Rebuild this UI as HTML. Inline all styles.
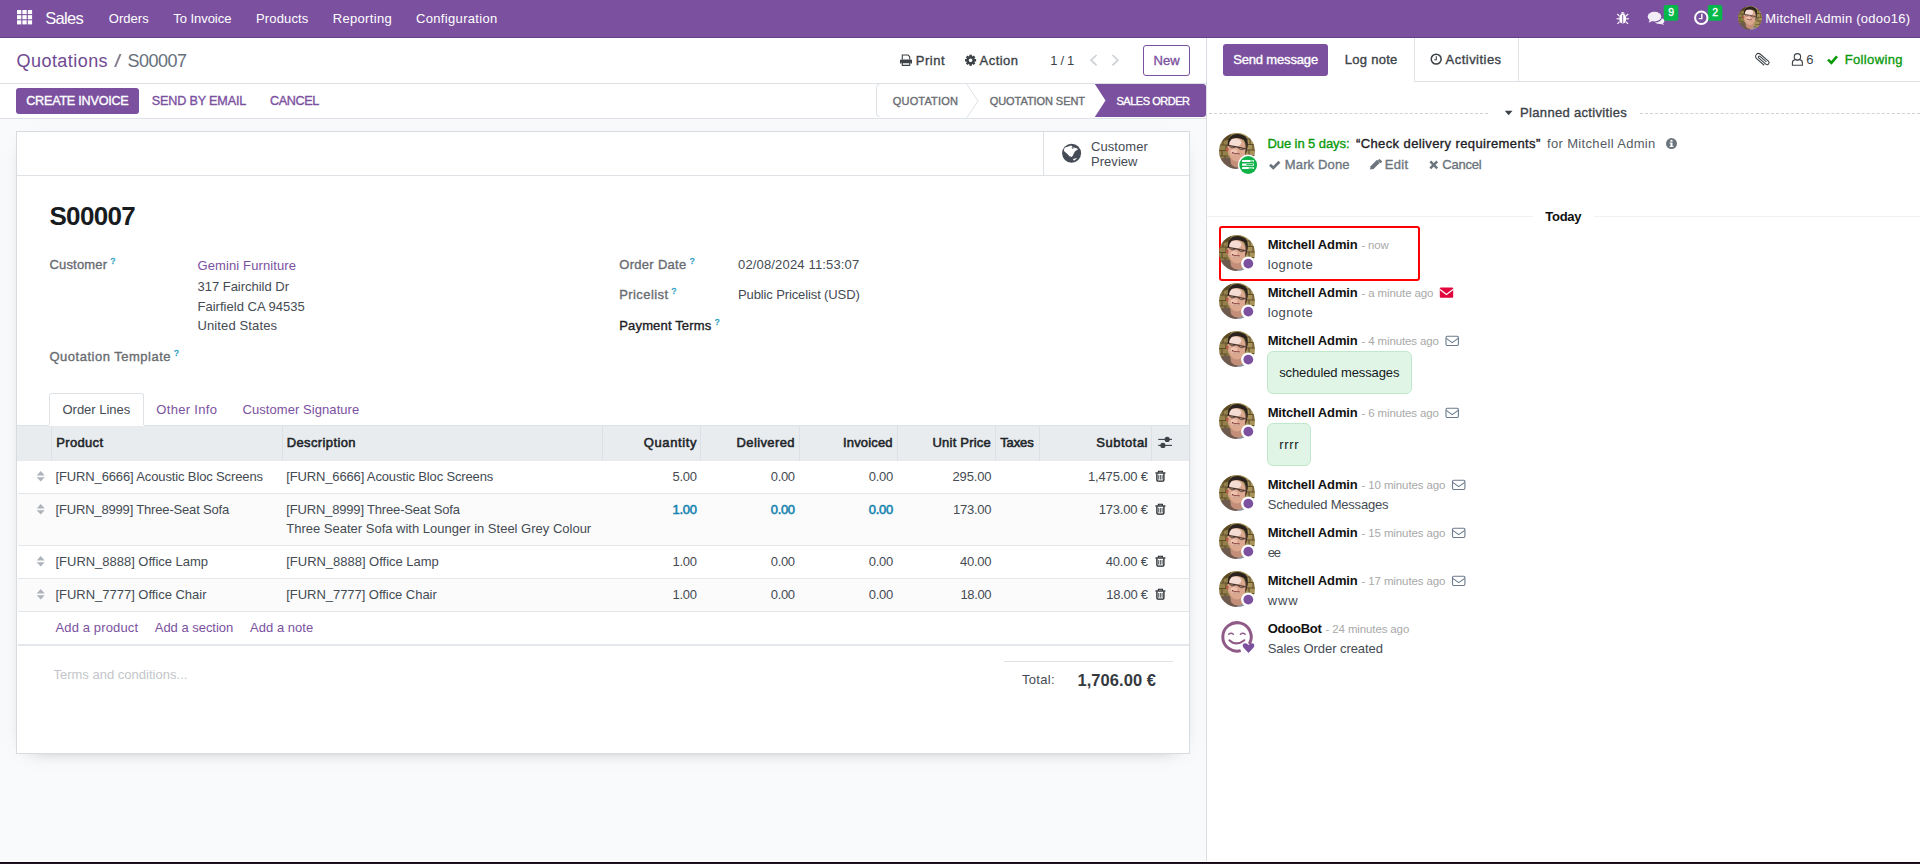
<!DOCTYPE html>
<html lang="en"><head><meta charset="utf-8"><title>Odoo - S00007</title>
<style>
html,body{margin:0;padding:0}
body{width:1920px;height:864px;overflow:hidden;position:relative;background:#f9fafb;font-family:'Liberation Sans',sans-serif;font-size:13px;color:#444b53}
.a{position:absolute;box-sizing:border-box}
.t{position:absolute;white-space:pre;font-family:'Liberation Sans',sans-serif}
svg{position:absolute;overflow:visible}
.hl{position:absolute;height:1px;background:#dee2e6}
.vl{position:absolute;width:1px;background:#dee2e6}

</style></head>
<body>
<!-- ===== navbar ===== -->
<div class="a" id="navbar" style="left:0;top:0;width:1920px;height:38px;background:#7b519f;border-bottom:1px solid #64408a"></div>
<!-- ===== control panel / status bar ===== -->
<div class="a" id="cp" style="left:0;top:38px;width:1206px;height:46px;background:#fff;border-bottom:1px solid #dee2e6"></div>
<div class="a" id="statusbar" style="left:0;top:84px;width:1206px;height:35px;background:#fff;border-bottom:1px solid #dee2e6"></div>
<!-- ===== chatter panel ===== -->
<div class="a" id="chatter" style="left:1206px;top:38px;width:714px;height:826px;background:#fff;border-left:1px solid #dadde3"></div>
<!-- bottom dark strip -->
<div class="a" style="left:0;top:861px;width:1920px;height:1px;background:#fff"></div>
<div class="a" style="left:0;top:862px;width:1920px;height:1px;background:#140312"></div>
<div class="a" style="left:0;top:863px;width:1920px;height:1px;background:#21131f"></div>

<!-- buttons in control panel -->
<div class="a" style="left:1143px;top:45px;width:47px;height:31px;border:1px solid #7b519f;border-radius:3px;background:#fff"></div>
<div class="a" style="left:16px;top:88px;width:123px;height:26px;background:#7b519f;border-radius:3px"></div>

<!-- status arrows -->
<svg style="left:876px;top:84px" width="331" height="34" viewBox="0 0 331 34">
  <path d="M3.5 0.5 Q0.5 0.5 0.5 3.5 V29.5 Q0.5 32.5 3.5 32.5" fill="none" stroke="#dee2e6"/>
  <path d="M91 0.5 L102 17 L91 33.5" fill="none" stroke="#dee2e6"/>
  <path d="M218.8 0 H327 Q330 0 330 3 V30 Q330 33 327 33 H218.8 L229.5 16.5 Z" fill="#7b519f"/>
</svg>

<!-- ===== form sheet ===== -->
<div class="a" id="sheet" style="left:16px;top:131px;width:1174px;height:623px;background:#fff;border:1px solid #d8dce1;box-shadow:0 5px 20px -15px rgba(0,0,0,.6)"></div>
<div class="hl" style="left:17px;top:175px;width:1172px"></div>
<div class="vl" style="left:1043px;top:132px;height:43px"></div>

<!-- notebook tab -->
<div class="a" style="left:49px;top:393px;width:95px;height:33px;border:1px solid #dee2e6;border-bottom:none;border-radius:3px 3px 0 0;background:#fff"></div>
<!-- table header -->
<div class="a" style="left:17px;top:425px;width:1172px;height:36px;background:#e9ecef;border-top:1px solid #dee2e6"></div>
<div class="a" style="left:49px;top:425px;width:95px;height:1px;background:#fff"></div>
<div class="vl" style="left:51px;top:426px;height:35px;background:#dde1e5"></div>
<div class="vl" style="left:282px;top:426px;height:35px;background:#dde1e5"></div>
<div class="vl" style="left:602px;top:426px;height:35px;background:#dde1e5"></div>
<div class="vl" style="left:700px;top:426px;height:35px;background:#dde1e5"></div>
<div class="vl" style="left:799px;top:426px;height:35px;background:#dde1e5"></div>
<div class="vl" style="left:897px;top:426px;height:35px;background:#dde1e5"></div>
<div class="vl" style="left:995px;top:426px;height:35px;background:#dde1e5"></div>
<div class="vl" style="left:1039px;top:426px;height:35px;background:#dde1e5"></div>
<div class="vl" style="left:1151px;top:426px;height:35px;background:#dde1e5"></div>
<!-- rows -->
<div class="a" style="left:17px;top:494px;width:1172px;height:51px;background:#fbfbfc"></div>
<div class="a" style="left:17px;top:579px;width:1172px;height:32px;background:#fbfbfc"></div>
<div class="hl" style="left:18px;top:493px;width:1171px;background:#e4e7ea"></div>
<div class="hl" style="left:18px;top:545px;width:1171px;background:#e4e7ea"></div>
<div class="hl" style="left:18px;top:578px;width:1171px;background:#e4e7ea"></div>
<div class="hl" style="left:18px;top:611px;width:1171px;background:#e4e7ea"></div>
<div class="hl" style="left:18px;top:644px;width:1171px;height:2px;background:#e4e8ec"></div>
<div class="hl" style="left:1004px;top:661px;width:169px;background:#dee2e6"></div>

<!-- ===== chatter topbar ===== -->
<div class="a" style="left:1223px;top:44px;width:105px;height:32px;background:#7b519f;border-radius:3px"></div>
<div class="vl" style="left:1414px;top:38px;height:44px"></div>
<div class="hl" style="left:1414px;top:81px;width:506px"></div>
<div class="vl" style="left:1518px;top:38px;height:43px"></div>
<!-- planned activities dashed -->
<div class="a" style="left:1209px;top:113px;width:279px;height:0;border-top:1px dashed #cfd3d8"></div>
<div class="a" style="left:1640px;top:113px;width:280px;height:0;border-top:1px dashed #cfd3d8"></div>
<!-- today separator -->
<div class="hl" style="left:1207px;top:216px;width:326px;background:#f1f2f4"></div>
<div class="hl" style="left:1594px;top:216px;width:326px;background:#f1f2f4"></div>
<!-- red highlight -->
<div class="a" style="left:1219px;top:226px;width:201px;height:55px;border:2px solid #ff0000;border-radius:3px"></div>
<!-- bubbles -->
<div class="a" style="left:1267px;top:351px;width:145px;height:43px;background:#e0f5e6;border:1px solid #bfe9cc;border-radius:6px"></div>
<div class="a" style="left:1267px;top:423px;width:44px;height:43px;background:#e0f5e6;border:1px solid #bfe9cc;border-radius:6px"></div>
<svg id="icons" style="left:0;top:0" width="1920" height="864" viewBox="0 0 1920 864">
<rect x="17.00" y="10.00" width="4.3" height="4.1" fill="#fff"/>
<rect x="17.00" y="15.15" width="4.3" height="4.1" fill="#fff"/>
<rect x="17.00" y="20.30" width="4.3" height="4.1" fill="#fff"/>
<rect x="22.40" y="10.00" width="4.3" height="4.1" fill="#fff"/>
<rect x="22.40" y="15.15" width="4.3" height="4.1" fill="#fff"/>
<rect x="22.40" y="20.30" width="4.3" height="4.1" fill="#fff"/>
<rect x="27.80" y="10.00" width="4.3" height="4.1" fill="#fff"/>
<rect x="27.80" y="15.15" width="4.3" height="4.1" fill="#fff"/>
<rect x="27.80" y="20.30" width="4.3" height="4.1" fill="#fff"/>
<g fill="none" stroke="#3c4248" stroke-width="1.1"><path d="M902.3 59.6 V55 H908 L909.7 56.7 V59.6"/><path d="M902.3 62.6 H909.7 V65.4 H902.3 Z" fill="#fff"/></g>
<path d="M901 59.4 H911 Q912 59.4 912 60.6 V63.6 H910.3 V62 H901.7 V63.6 H900 V60.6 Q900 59.4 901 59.4 Z" fill="#3c4248"/>
<g transform="translate(970.6 60.25)" fill="#3c4248"><circle r="3.05" fill="none" stroke="#3c4248" stroke-width="2.5"/><rect x="-1.25" y="-5.55" width="2.5" height="2.2" transform="rotate(0)"/><rect x="-1.25" y="-5.55" width="2.5" height="2.2" transform="rotate(45)"/><rect x="-1.25" y="-5.55" width="2.5" height="2.2" transform="rotate(90)"/><rect x="-1.25" y="-5.55" width="2.5" height="2.2" transform="rotate(135)"/><rect x="-1.25" y="-5.55" width="2.5" height="2.2" transform="rotate(180)"/><rect x="-1.25" y="-5.55" width="2.5" height="2.2" transform="rotate(225)"/><rect x="-1.25" y="-5.55" width="2.5" height="2.2" transform="rotate(270)"/><rect x="-1.25" y="-5.55" width="2.5" height="2.2" transform="rotate(315)"/></g>
<path d="M1096.6 55 L1091 60.2 L1096.6 65.4" fill="none" stroke="#cdd1d5" stroke-width="1.7"/>
<path d="M1112.4 55 L1118 60.2 L1112.4 65.4" fill="none" stroke="#cdd1d5" stroke-width="1.7"/>
<circle cx="1071.6" cy="153.2" r="9.5" fill="#454c55"/>
<path d="M1063.75 149.75 L1065.01 147.46 L1068.91 146.32 L1071.32 145.51 L1072.92 147.35 L1076.93 148.15 L1077.97 149.52 L1075.33 151.01 L1073.95 153.19 L1073.15 155.03 L1071.89 156.97 L1069.48 156.17 L1067.65 154.22 L1065.59 152.62 L1064.21 151.13 Z" fill="#fff"/>
<path d="M1072.92 159.04 L1077.28 158.01 L1074.07 160.76 Z" fill="#fff"/>
<path d="M1071.32 146.89 L1074.07 147.75 L1072.64 149.07 Z" fill="#454c55"/>
<ellipse cx="1622.7" cy="18.6" rx="3.5" ry="5" fill="#fff"/>
<path d="M1620.6 13.6 A2.2 2.2 0 0 1 1624.8 13.6 Z" fill="#fff"/>
<path d="M1622.7 15 V23.5" stroke="#7b519f" stroke-width="0.9"/>
<g stroke="#fff" stroke-width="1.15" fill="none"><path d="M1619.4 16.2 L1617.2 13.9"/><path d="M1626 16.2 L1628.2 13.9"/><path d="M1619.2 18.8 H1616.6"/><path d="M1626.2 18.8 H1628.8"/><path d="M1619.6 21.6 L1617.4 23.8"/><path d="M1625.8 21.6 L1628 23.8"/></g>
<g fill="#f1ecf6"><ellipse cx="1659.6" cy="21" rx="4.8" ry="3" /><path d="M1662 22.5 L1664.2 25 L1659 23.6 Z"/></g>
<ellipse cx="1654.6" cy="17" rx="7.6" ry="5.6" fill="#7b519f"/>
<g fill="#f1ecf6"><ellipse cx="1654.5" cy="16.6" rx="6.8" ry="4.9"/><path d="M1650 19 L1648.6 22.8 L1653.5 20.6 Z"/></g>
<rect x="1663.8" y="5.1" width="14.5" height="15.7" rx="2.2" fill="#06b84a"/>
<rect x="1707.8" y="5.1" width="14.5" height="15.7" rx="2.2" fill="#06b84a"/>
<circle cx="1701.3" cy="17.8" r="6.2" fill="none" stroke="#fff" stroke-width="2"/>
<path d="M1701.8 13.8 V18.6 H1698.8" fill="none" stroke="#fff" stroke-width="1.4"/>
<g transform="translate(1761.3 60.2) rotate(-49)" fill="none" stroke="#3c4248" stroke-width="1.05"><path d="M-1.9 5.5 V-4.6 A2.9 2.9 0 0 1 3.9 -4.6 V6 A1.95 1.95 0 0 1 0 6 V-3.5 A1 1 0 0 1 2 -3.5 V5"/></g>
<g fill="none" stroke="#3c4248" stroke-width="1.1"><circle cx="1797.4" cy="56.8" r="3.2"/><path d="M1792.4 65.3 V63 Q1792.4 59.9 1795.2 59.6 Q1797.4 61 1799.6 59.6 Q1802.4 59.9 1802.4 63 V65.3 Z"/></g>
<path d="M1828 59.6 L1831.4 62.8 L1837 56.4" fill="none" stroke="#0b9a0b" stroke-width="2.6"/>
<circle cx="1436.2" cy="59.15" r="4.95" fill="none" stroke="#3c4248" stroke-width="1.5"/>
<path d="M1436.3 56.2 V59.8 H1434.2" fill="none" stroke="#3c4248" stroke-width="1.1"/>
<path d="M1504.8 110.8 H1512.5 L1508.65 115.2 Z" fill="#3c4248"/>
<path d="M1270 164.8 L1273.3 167.9 L1279.4 161.7" fill="none" stroke="#6c757d" stroke-width="2.8"/>
<g fill="#6c757d"><path d="M1370 169.5 L1370.6 166.2 L1377 159.8 L1379.9 162.7 L1373.5 169.1 Z"/><path d="M1377.8 159 L1378.9 157.9 Q1379.5 157.4 1380.1 158 L1381.8 159.7 Q1382.3 160.3 1381.8 160.8 L1380.7 161.9 Z" transform="translate(0 1.4)"/></g>
<path d="M1430.3 161.4 L1437.2 168.3 M1437.2 161.4 L1430.3 168.3" fill="none" stroke="#6c757d" stroke-width="2.5"/>
<circle cx="1671.5" cy="143.6" r="5.5" fill="#6c757d"/><rect x="1670.5" y="142.6" width="2" height="4.2" fill="#fff"/><rect x="1670.5" y="139.9" width="2" height="1.8" fill="#fff"/><rect x="1669.6" y="142.6" width="1.5" height="1" fill="#fff"/><rect x="1669.6" y="145.9" width="3.8" height="1" fill="#fff"/>
<g stroke="#3c4248" stroke-width="1.1"><path d="M1158.2 439.4 H1172"/><path d="M1158.2 445.4 H1172"/></g><circle cx="1167.2" cy="439.4" r="2.6" fill="#3c4248"/><circle cx="1162.9" cy="445.4" r="2.6" fill="#3c4248"/>
<g fill="#adb3ba" transform="translate(0 0)"><path d="M36.7 475.5 H44.7 L40.7 470.9 Z"/><path d="M36.7 477.2 H44.7 L40.7 481.5 Z"/></g>
<g transform="translate(0 0)" fill="none" stroke="#1d2125"><path d="M1155.4 473 H1165.4" stroke-width="1.3"/><path d="M1158.4 472.6 V471.2 H1162.4 V472.6" stroke-width="1.1"/><path d="M1156.9 473.4 V480.1 Q1156.9 481.1 1157.9 481.1 H1162.9 Q1163.9 481.1 1163.9 480.1 V473.4" stroke-width="1.3"/><path d="M1158.7 475 V479.6 M1160.4 475 V479.6 M1162.1 475 V479.6" stroke-width="0.75"/></g>
<g fill="#adb3ba" transform="translate(0 33)"><path d="M36.7 475.5 H44.7 L40.7 470.9 Z"/><path d="M36.7 477.2 H44.7 L40.7 481.5 Z"/></g>
<g transform="translate(0 33)" fill="none" stroke="#1d2125"><path d="M1155.4 473 H1165.4" stroke-width="1.3"/><path d="M1158.4 472.6 V471.2 H1162.4 V472.6" stroke-width="1.1"/><path d="M1156.9 473.4 V480.1 Q1156.9 481.1 1157.9 481.1 H1162.9 Q1163.9 481.1 1163.9 480.1 V473.4" stroke-width="1.3"/><path d="M1158.7 475 V479.6 M1160.4 475 V479.6 M1162.1 475 V479.6" stroke-width="0.75"/></g>
<g fill="#adb3ba" transform="translate(0 85)"><path d="M36.7 475.5 H44.7 L40.7 470.9 Z"/><path d="M36.7 477.2 H44.7 L40.7 481.5 Z"/></g>
<g transform="translate(0 85)" fill="none" stroke="#1d2125"><path d="M1155.4 473 H1165.4" stroke-width="1.3"/><path d="M1158.4 472.6 V471.2 H1162.4 V472.6" stroke-width="1.1"/><path d="M1156.9 473.4 V480.1 Q1156.9 481.1 1157.9 481.1 H1162.9 Q1163.9 481.1 1163.9 480.1 V473.4" stroke-width="1.3"/><path d="M1158.7 475 V479.6 M1160.4 475 V479.6 M1162.1 475 V479.6" stroke-width="0.75"/></g>
<g fill="#adb3ba" transform="translate(0 118)"><path d="M36.7 475.5 H44.7 L40.7 470.9 Z"/><path d="M36.7 477.2 H44.7 L40.7 481.5 Z"/></g>
<g transform="translate(0 118)" fill="none" stroke="#1d2125"><path d="M1155.4 473 H1165.4" stroke-width="1.3"/><path d="M1158.4 472.6 V471.2 H1162.4 V472.6" stroke-width="1.1"/><path d="M1156.9 473.4 V480.1 Q1156.9 481.1 1157.9 481.1 H1162.9 Q1163.9 481.1 1163.9 480.1 V473.4" stroke-width="1.3"/><path d="M1158.7 475 V479.6 M1160.4 475 V479.6 M1162.1 475 V479.6" stroke-width="0.75"/></g>
<rect x="1439.8" y="287.5" width="13.4" height="10.3" rx="1.2" fill="#e1063c"/><path d="M1440 289.6 L1446.5 294.4 L1453 289.6" fill="none" stroke="#fff" stroke-width="1.3"/>
<g fill="none" stroke="#6b7a8c" stroke-width="1.1"><rect x="1446.0" y="336.3" width="12.4" height="9.2" rx="1.2"/><path d="M1446.2 338.4 L1452.2 342.6 L1458.2 338.4"/></g>
<g fill="none" stroke="#6b7a8c" stroke-width="1.1"><rect x="1446.0" y="408.3" width="12.4" height="9.2" rx="1.2"/><path d="M1446.2 410.4 L1452.2 414.6 L1458.2 410.4"/></g>
<g fill="none" stroke="#6b7a8c" stroke-width="1.1"><rect x="1452.5" y="480.3" width="12.4" height="9.2" rx="1.2"/><path d="M1452.7 482.4 L1458.7 486.6 L1464.7 482.4"/></g>
<g fill="none" stroke="#6b7a8c" stroke-width="1.1"><rect x="1452.5" y="528.3" width="12.4" height="9.2" rx="1.2"/><path d="M1452.7 530.4 L1458.7 534.6 L1464.7 530.4"/></g>
<g fill="none" stroke="#6b7a8c" stroke-width="1.1"><rect x="1452.5" y="576.3" width="12.4" height="9.2" rx="1.2"/><path d="M1452.7 578.4 L1458.7 582.6 L1464.7 578.4"/></g>
</svg>
<svg width="0" height="0" style="left:0;top:0"><defs>
<filter id="bl" x="-10%" y="-10%" width="120%" height="120%"><feGaussianBlur stdDeviation="0.7"/></filter>
<clipPath id="cc"><circle cx="18" cy="18" r="18"/></clipPath>
<symbol id="av" viewBox="0 0 36 36">
 <g clip-path="url(#cc)"><g filter="url(#bl)">
  <rect x="-2" y="-2" width="40" height="40" fill="#94804a"/>
  <path d="M-2 -2 H14 L9 7 L-2 9 Z" fill="#5a4724"/>
  <rect x="22" y="-2" width="16" height="40" fill="#a8935a"/>
  <g stroke="#5e4e2a" stroke-width="1.1" fill="none">
   <path d="M-1 6.5 H12 M-1 12 H10 M-1 17.5 H9 M-1 23 H9 M-1 28 H8"/>
   <path d="M26 6 H37 M27 11.5 H37 M27 17 H37 M27 22.5 H37 M26 28 H37"/>
   <path d="M4 6.5 V12 M7 12 V17.5 M3 17.5 V23 M6 23 V28 M31 6 V11.5 M34 11.5 V17 M30 17 V22.5 M33 22.5 V28"/>
  </g>
  <path d="M-2 38 V27 Q6 23.5 12 25 L24 30 Q30 32 31 38 Z" fill="#6d5a4e"/>
  <path d="M17 38 Q18 32 27 31.5 L31 38 Z" fill="#8b919c"/>
  <path d="M11 24 L23 24 L24 33 Q17 37 12 31 Z" fill="#c48f78"/>
  <ellipse cx="17.6" cy="16.2" rx="9.2" ry="12.2" transform="rotate(-6 17.6 16.2)" fill="#dba78f"/>
  <ellipse cx="16.2" cy="9.6" rx="6.2" ry="4.2" fill="#f6ddd3"/>
  <ellipse cx="15" cy="19" rx="3.4" ry="3" fill="#efc3b0"/>
  <ellipse cx="8.3" cy="16.6" rx="1.3" ry="2.4" fill="#b9604e"/>
  <path d="M8.8 12.5 Q8.2 4.5 14 1.8 Q21 -0.6 26.6 3.6 Q29.6 7.4 28.6 14.6 L27.4 15.6 Q27 9.6 24.8 7 Q19 3.8 12.6 6 Q10.4 8 9.8 12.6 Z" fill="#2b211e"/>
  <path d="M26.6 9 Q29 12 27.8 19 L26 22 Q27 15 26.6 9 Z" fill="#4a362e"/>
  <path d="M8.2 12.3 L16.4 13.6 L26.8 15.8" stroke="#43332f" stroke-width="1.1" fill="none"/>
  <path d="M10.4 13.2 Q12.6 16.2 16 14.2 M18.6 14.6 Q21.4 17.8 25.4 16" stroke="#4b3a35" stroke-width="0.9" fill="none"/>
  <path d="M13 19.6 Q16.4 21.8 20.4 20.6" stroke="#7c2f2c" stroke-width="1.5" fill="none"/>
  <path d="M13.6 20.6 Q16.6 22 19.6 21.2" stroke="#f2e2da" stroke-width="0.7" fill="none"/>
 </g></g>
</symbol></defs></svg>

<svg style="left:1738px;top:6px" width="24" height="24"><use href="#av"/></svg>
<svg style="left:1219px;top:133px" width="36" height="36"><use href="#av"/></svg>
<svg style="left:1219px;top:235px" width="36" height="36"><use href="#av"/></svg>
<svg style="left:1219px;top:283px" width="36" height="36"><use href="#av"/></svg>
<svg style="left:1219px;top:331px" width="36" height="36"><use href="#av"/></svg>
<svg style="left:1219px;top:403px" width="36" height="36"><use href="#av"/></svg>
<svg style="left:1219px;top:475px" width="36" height="36"><use href="#av"/></svg>
<svg style="left:1219px;top:523px" width="36" height="36"><use href="#av"/></svg>
<svg style="left:1219px;top:571px" width="36" height="36"><use href="#av"/></svg>
<svg id="ov" style="left:0;top:0" width="1920" height="864" viewBox="0 0 1920 864"><circle cx="1248.3" cy="263.6" r="7.2" fill="#fff"/><circle cx="1248.3" cy="263.6" r="4.9" fill="#7b519f"/>
<circle cx="1248.3" cy="311.6" r="7.2" fill="#fff"/><circle cx="1248.3" cy="311.6" r="4.9" fill="#7b519f"/>
<circle cx="1248.3" cy="359.6" r="7.2" fill="#fff"/><circle cx="1248.3" cy="359.6" r="4.9" fill="#7b519f"/>
<circle cx="1248.3" cy="431.6" r="7.2" fill="#fff"/><circle cx="1248.3" cy="431.6" r="4.9" fill="#7b519f"/>
<circle cx="1248.3" cy="503.6" r="7.2" fill="#fff"/><circle cx="1248.3" cy="503.6" r="4.9" fill="#7b519f"/>
<circle cx="1248.3" cy="551.6" r="7.2" fill="#fff"/><circle cx="1248.3" cy="551.6" r="4.9" fill="#7b519f"/>
<circle cx="1248.3" cy="599.6" r="7.2" fill="#fff"/><circle cx="1248.3" cy="599.6" r="4.9" fill="#7b519f"/>
<circle cx="1248.2" cy="165" r="10.4" fill="#fff"/><circle cx="1248.2" cy="165" r="8.9" fill="#12b24a"/><g fill="#ffffff"><rect x="1242" y="160.1" width="12" height="2" rx="0.4"/><rect x="1242" y="163.6" width="12" height="2.1" rx="0.4"/><rect x="1242" y="167.1" width="12" height="2" rx="0.4"/></g><g fill="#12b24a"><rect x="1250.2" y="160.6" width="3" height="1"/><rect x="1246.4" y="164.1" width="6.8" height="1.1"/><rect x="1248.6" y="167.6" width="4.6" height="1"/></g>
<path d="M1249.3 644 A14.2 14.2 0 1 0 1240.7 650.6" fill="none" stroke="#8f5a88" stroke-width="3"/><path d="M1229.4 640.2 Q1236 646.6 1244.4 640.2" fill="none" stroke="#8f5a88" stroke-width="2" stroke-linecap="round"/><path d="M1228.6 634.2 Q1231 632.2 1233.4 634.2 M1240.4 634.2 Q1242.8 632.2 1245.2 634.2" fill="none" stroke="#8f5a88" stroke-width="1.4" stroke-linecap="round"/><path d="M1248.5 653 L1243.4 647.6 Q1241.8 645.2 1243.8 643.6 Q1246.2 642.2 1248.5 645 Q1250.8 642.2 1253.2 643.6 Q1255.2 645.2 1253.6 647.6 Z" fill="#7b519f"/></svg>

<div id="txt">
<span class="t" style="left:45.30px;top:10.00px;font-size:16.5px;line-height:16.5px;color:#ffffff;letter-spacing:-0.695px;">Sales</span>
<span class="t" style="left:108.75px;top:12.00px;font-size:13px;line-height:13px;color:#ffffff;letter-spacing:0.053px;">Orders</span>
<span class="t" style="left:173.20px;top:12.00px;font-size:13px;line-height:13px;color:#ffffff;letter-spacing:-0.039px;">To Invoice</span>
<span class="t" style="left:256.00px;top:12.00px;font-size:13px;line-height:13px;color:#ffffff;letter-spacing:0.141px;">Products</span>
<span class="t" style="left:332.70px;top:12.00px;font-size:13px;line-height:13px;color:#ffffff;letter-spacing:0.328px;">Reporting</span>
<span class="t" style="left:416.00px;top:12.00px;font-size:13px;line-height:13px;color:#ffffff;letter-spacing:0.331px;">Configuration</span>
<span class="t" style="left:1765.30px;top:12.00px;font-size:13px;line-height:13px;color:#ffffff;letter-spacing:0.238px;">Mitchell Admin (odoo16)</span>
<span class="t" style="left:1668.30px;top:7.00px;font-size:10.5px;line-height:10.5px;color:#ffffff;-webkit-text-stroke:0.35px;">9</span>
<span class="t" style="left:1712.30px;top:7.00px;font-size:10.5px;line-height:10.5px;color:#ffffff;-webkit-text-stroke:0.35px;">2</span>
<span class="t" style="left:16.60px;top:52.00px;font-size:18px;line-height:18px;color:#6f4a92;letter-spacing:0.438px;">Quotations</span>
<span class="t" style="left:114.40px;top:52.00px;font-size:18px;line-height:18px;color:#8a7f8f;transform:scaleX(1.5);transform-origin:0 0;">/</span>
<span class="t" style="left:127.50px;top:52.00px;font-size:18px;line-height:18px;color:#66707a;letter-spacing:-0.533px;">S00007</span>
<span class="t" style="left:915.70px;top:54.00px;font-size:13px;line-height:13px;color:#3c4248;letter-spacing:0.566px;-webkit-text-stroke:0.35px;">Print</span>
<span class="t" style="left:979.60px;top:54.00px;font-size:13px;line-height:13px;color:#3c4248;letter-spacing:0.452px;-webkit-text-stroke:0.35px;">Action</span>
<span class="t" style="left:1050.30px;top:54.00px;font-size:13px;line-height:13px;color:#3c4248;letter-spacing:-0.324px;">1 / 1</span>
<span class="t" style="left:1153.40px;top:54.00px;font-size:13px;line-height:13px;color:#7b519f;letter-spacing:0.142px;-webkit-text-stroke:0.35px;">New</span>
<span class="t" style="left:26.25px;top:95.00px;font-size:12.6px;line-height:12.6px;color:#ffffff;letter-spacing:-0.226px;-webkit-text-stroke:0.35px;">CREATE INVOICE</span>
<span class="t" style="left:151.75px;top:95.00px;font-size:12.6px;line-height:12.6px;color:#7b519f;letter-spacing:-0.155px;-webkit-text-stroke:0.35px;">SEND BY EMAIL</span>
<span class="t" style="left:270.00px;top:95.00px;font-size:12.6px;line-height:12.6px;color:#7b519f;letter-spacing:-0.369px;-webkit-text-stroke:0.35px;">CANCEL</span>
<span class="t" style="left:892.80px;top:96.00px;font-size:11px;line-height:11px;color:#696c71;letter-spacing:0.167px;-webkit-text-stroke:0.35px;">QUOTATION</span>
<span class="t" style="left:989.75px;top:96.00px;font-size:11px;line-height:11px;color:#696c71;letter-spacing:-0.070px;-webkit-text-stroke:0.35px;">QUOTATION SENT</span>
<span class="t" style="left:1116.50px;top:96.00px;font-size:11px;line-height:11px;color:#ffffff;letter-spacing:-0.475px;-webkit-text-stroke:0.35px;">SALES ORDER</span>
<span class="t" style="left:1091.00px;top:140.00px;font-size:13px;line-height:13px;color:#444b53;letter-spacing:0.063px;">Customer</span>
<span class="t" style="left:1091.00px;top:155.00px;font-size:13px;line-height:13px;color:#444b53;letter-spacing:0.042px;">Preview</span>
<span class="t" style="left:49.40px;top:203.00px;font-size:26px;line-height:26px;color:#181c20;letter-spacing:-0.651px;font-weight:700;">S00007</span>
<span class="t" style="left:49.50px;top:258.00px;font-size:13px;line-height:13px;color:#696c71;letter-spacing:0.163px;-webkit-text-stroke:0.35px;">Customer</span>
<span class="t" style="left:110.60px;top:257.00px;font-size:8.5px;line-height:8.5px;color:#2a9fc4;-webkit-text-stroke:0.35px;">?</span>
<span class="t" style="left:197.50px;top:259.00px;font-size:13px;line-height:13px;color:#7b519f;letter-spacing:0.113px;">Gemini Furniture</span>
<span class="t" style="left:197.50px;top:280.00px;font-size:13px;line-height:13px;color:#444b53;letter-spacing:-0.018px;">317 Fairchild Dr</span>
<span class="t" style="left:197.50px;top:300.00px;font-size:13px;line-height:13px;color:#444b53;letter-spacing:0.017px;">Fairfield CA 94535</span>
<span class="t" style="left:197.50px;top:319.00px;font-size:13px;line-height:13px;color:#444b53;letter-spacing:0.121px;">United States</span>
<span class="t" style="left:49.50px;top:350.00px;font-size:13px;line-height:13px;color:#696c71;letter-spacing:0.500px;-webkit-text-stroke:0.35px;">Quotation Template</span>
<span class="t" style="left:174.10px;top:349.00px;font-size:8.5px;line-height:8.5px;color:#2a9fc4;-webkit-text-stroke:0.35px;">?</span>
<span class="t" style="left:619.25px;top:258.00px;font-size:13px;line-height:13px;color:#696c71;letter-spacing:0.299px;-webkit-text-stroke:0.35px;">Order Date</span>
<span class="t" style="left:689.85px;top:257.00px;font-size:8.5px;line-height:8.5px;color:#2a9fc4;-webkit-text-stroke:0.35px;">?</span>
<span class="t" style="left:738.00px;top:258.00px;font-size:13px;line-height:13px;color:#444b53;letter-spacing:0.162px;">02/08/2024 11:53:07</span>
<span class="t" style="left:619.25px;top:288.00px;font-size:13px;line-height:13px;color:#696c71;letter-spacing:0.404px;-webkit-text-stroke:0.35px;">Pricelist</span>
<span class="t" style="left:671.60px;top:287.00px;font-size:8.5px;line-height:8.5px;color:#2a9fc4;-webkit-text-stroke:0.35px;">?</span>
<span class="t" style="left:738.00px;top:288.00px;font-size:13px;line-height:13px;color:#444b53;letter-spacing:-0.119px;">Public Pricelist (USD)</span>
<span class="t" style="left:619.25px;top:319.00px;font-size:13px;line-height:13px;color:#1d2125;letter-spacing:0.160px;-webkit-text-stroke:0.35px;">Payment Terms</span>
<span class="t" style="left:714.85px;top:318.00px;font-size:8.5px;line-height:8.5px;color:#2a9fc4;-webkit-text-stroke:0.35px;">?</span>
<span class="t" style="left:62.50px;top:403.00px;font-size:13px;line-height:13px;color:#444b53;letter-spacing:-0.017px;">Order Lines</span>
<span class="t" style="left:156.25px;top:403.00px;font-size:13px;line-height:13px;color:#7b519f;letter-spacing:0.326px;">Other Info</span>
<span class="t" style="left:242.50px;top:403.00px;font-size:13px;line-height:13px;color:#7b519f;letter-spacing:0.066px;">Customer Signature</span>
<span class="t" style="left:56.25px;top:436.00px;font-size:13px;line-height:13px;color:#212529;letter-spacing:0.323px;-webkit-text-stroke:0.55px;">Product</span>
<span class="t" style="left:286.75px;top:436.00px;font-size:13px;line-height:13px;color:#212529;letter-spacing:0.372px;-webkit-text-stroke:0.55px;">Description</span>
<span class="t" style="left:643.75px;top:436.00px;font-size:13px;line-height:13px;color:#212529;letter-spacing:0.618px;-webkit-text-stroke:0.55px;">Quantity</span>
<span class="t" style="left:736.50px;top:436.00px;font-size:13px;line-height:13px;color:#212529;letter-spacing:0.385px;-webkit-text-stroke:0.55px;">Delivered</span>
<span class="t" style="left:843.00px;top:436.00px;font-size:13px;line-height:13px;color:#212529;letter-spacing:0.154px;-webkit-text-stroke:0.55px;">Invoiced</span>
<span class="t" style="left:932.50px;top:436.00px;font-size:13px;line-height:13px;color:#212529;letter-spacing:0.210px;-webkit-text-stroke:0.55px;">Unit Price</span>
<span class="t" style="left:1000.20px;top:436.00px;font-size:13px;line-height:13px;color:#212529;letter-spacing:-0.117px;-webkit-text-stroke:0.55px;">Taxes</span>
<span class="t" style="left:1096.25px;top:436.00px;font-size:13px;line-height:13px;color:#212529;letter-spacing:0.507px;-webkit-text-stroke:0.55px;">Subtotal</span>
<span class="t" style="left:55.50px;top:470.00px;font-size:13px;line-height:13px;color:#444b53;letter-spacing:-0.132px;">[FURN_6666] Acoustic Bloc Screens</span>
<span class="t" style="left:286.25px;top:470.00px;font-size:13px;line-height:13px;color:#444b53;letter-spacing:-0.147px;">[FURN_6666] Acoustic Bloc Screens</span>
<span class="t" style="left:672.50px;top:470.00px;font-size:13px;line-height:13px;color:#444b53;letter-spacing:-0.271px;">5.00</span>
<span class="t" style="left:770.75px;top:470.00px;font-size:13px;line-height:13px;color:#444b53;letter-spacing:-0.354px;">0.00</span>
<span class="t" style="left:868.75px;top:470.00px;font-size:13px;line-height:13px;color:#444b53;letter-spacing:-0.271px;">0.00</span>
<span class="t" style="left:952.50px;top:470.00px;font-size:13px;line-height:13px;color:#444b53;letter-spacing:-0.153px;">295.00</span>
<span class="t" style="left:1088.00px;top:470.00px;font-size:13px;line-height:13px;color:#444b53;letter-spacing:-0.161px;">1,475.00 €</span>
<span class="t" style="left:55.50px;top:503.00px;font-size:13px;line-height:13px;color:#444b53;letter-spacing:-0.173px;">[FURN_8999] Three-Seat Sofa</span>
<span class="t" style="left:286.25px;top:503.00px;font-size:13px;line-height:13px;color:#444b53;letter-spacing:-0.173px;">[FURN_8999] Three-Seat Sofa</span>
<span class="t" style="left:672.50px;top:503.00px;font-size:13px;line-height:13px;color:#1583b0;letter-spacing:-0.271px;-webkit-text-stroke:0.55px;">1.00</span>
<span class="t" style="left:770.75px;top:503.00px;font-size:13px;line-height:13px;color:#1583b0;letter-spacing:-0.354px;-webkit-text-stroke:0.55px;">0.00</span>
<span class="t" style="left:868.75px;top:503.00px;font-size:13px;line-height:13px;color:#1583b0;letter-spacing:-0.271px;-webkit-text-stroke:0.55px;">0.00</span>
<span class="t" style="left:953.00px;top:503.00px;font-size:13px;line-height:13px;color:#444b53;letter-spacing:-0.253px;">173.00</span>
<span class="t" style="left:1098.75px;top:503.00px;font-size:13px;line-height:13px;color:#444b53;letter-spacing:-0.194px;">173.00 €</span>
<span class="t" style="left:286.25px;top:522.00px;font-size:13px;line-height:13px;color:#444b53;">Three Seater Sofa with Lounger in Steel Grey Colour</span>
<span class="t" style="left:55.50px;top:555.00px;font-size:13px;line-height:13px;color:#444b53;letter-spacing:-0.021px;">[FURN_8888] Office Lamp</span>
<span class="t" style="left:286.25px;top:555.00px;font-size:13px;line-height:13px;color:#444b53;letter-spacing:-0.021px;">[FURN_8888] Office Lamp</span>
<span class="t" style="left:672.50px;top:555.00px;font-size:13px;line-height:13px;color:#444b53;letter-spacing:-0.271px;">1.00</span>
<span class="t" style="left:770.75px;top:555.00px;font-size:13px;line-height:13px;color:#444b53;letter-spacing:-0.354px;">0.00</span>
<span class="t" style="left:868.75px;top:555.00px;font-size:13px;line-height:13px;color:#444b53;letter-spacing:-0.271px;">0.00</span>
<span class="t" style="left:960.00px;top:555.00px;font-size:13px;line-height:13px;color:#444b53;letter-spacing:-0.262px;">40.00</span>
<span class="t" style="left:1105.75px;top:555.00px;font-size:13px;line-height:13px;color:#444b53;letter-spacing:-0.188px;">40.00 €</span>
<span class="t" style="left:55.50px;top:588.00px;font-size:13px;line-height:13px;color:#444b53;letter-spacing:-0.022px;">[FURN_7777] Office Chair</span>
<span class="t" style="left:286.25px;top:588.00px;font-size:13px;line-height:13px;color:#444b53;letter-spacing:-0.043px;">[FURN_7777] Office Chair</span>
<span class="t" style="left:672.50px;top:588.00px;font-size:13px;line-height:13px;color:#444b53;letter-spacing:-0.271px;">1.00</span>
<span class="t" style="left:770.75px;top:588.00px;font-size:13px;line-height:13px;color:#444b53;letter-spacing:-0.354px;">0.00</span>
<span class="t" style="left:868.75px;top:588.00px;font-size:13px;line-height:13px;color:#444b53;letter-spacing:-0.271px;">0.00</span>
<span class="t" style="left:960.50px;top:588.00px;font-size:13px;line-height:13px;color:#444b53;letter-spacing:-0.387px;">18.00</span>
<span class="t" style="left:1106.25px;top:588.00px;font-size:13px;line-height:13px;color:#444b53;letter-spacing:-0.271px;">18.00 €</span>
<span class="t" style="left:55.50px;top:621.00px;font-size:13px;line-height:13px;color:#7b519f;letter-spacing:0.129px;">Add a product</span>
<span class="t" style="left:154.75px;top:621.00px;font-size:13px;line-height:13px;color:#7b519f;letter-spacing:-0.023px;">Add a section</span>
<span class="t" style="left:250.00px;top:621.00px;font-size:13px;line-height:13px;color:#7b519f;letter-spacing:0.040px;">Add a note</span>
<span class="t" style="left:53.40px;top:668.00px;font-size:13px;line-height:13px;color:#c3c6ca;letter-spacing:0.014px;">Terms and conditions...</span>
<span class="t" style="left:1022.00px;top:673.00px;font-size:13px;line-height:13px;color:#444b53;letter-spacing:0.284px;">Total:</span>
<span class="t" style="left:1077.50px;top:672.00px;font-size:16.5px;line-height:16.5px;color:#343a40;letter-spacing:0.056px;font-weight:700;">1,706.00 €</span>
<span class="t" style="left:1233.20px;top:53.00px;font-size:13px;line-height:13px;color:#ffffff;letter-spacing:-0.158px;-webkit-text-stroke:0.35px;">Send message</span>
<span class="t" style="left:1344.75px;top:53.00px;font-size:13px;line-height:13px;color:#3c4248;letter-spacing:0.270px;-webkit-text-stroke:0.35px;">Log note</span>
<span class="t" style="left:1445.60px;top:53.00px;font-size:13px;line-height:13px;color:#3c4248;letter-spacing:0.467px;-webkit-text-stroke:0.35px;">Activities</span>
<span class="t" style="left:1806.30px;top:53.00px;font-size:13px;line-height:13px;color:#3c4248;">6</span>
<span class="t" style="left:1844.70px;top:53.00px;font-size:13px;line-height:13px;color:#0b9a0b;letter-spacing:0.360px;-webkit-text-stroke:0.35px;">Following</span>
<span class="t" style="left:1520.10px;top:106.00px;font-size:13px;line-height:13px;color:#3c4248;letter-spacing:0.319px;-webkit-text-stroke:0.35px;">Planned activities</span>
<span class="t" style="left:1267.50px;top:137.00px;font-size:13px;line-height:13px;color:#0b9a0b;letter-spacing:-0.085px;-webkit-text-stroke:0.35px;">Due in 5 days:</span>
<span class="t" style="left:1356.00px;top:137.00px;font-size:13px;line-height:13px;color:#1d2125;letter-spacing:0.389px;-webkit-text-stroke:0.35px;">“Check delivery requirements”</span>
<span class="t" style="left:1547.10px;top:137.00px;font-size:13px;line-height:13px;color:#555b62;letter-spacing:0.330px;">for Mitchell Admin</span>
<span class="t" style="left:1284.75px;top:158.00px;font-size:13px;line-height:13px;color:#6c757d;letter-spacing:0.159px;-webkit-text-stroke:0.35px;">Mark Done</span>
<span class="t" style="left:1384.70px;top:158.00px;font-size:13px;line-height:13px;color:#6c757d;letter-spacing:0.331px;-webkit-text-stroke:0.35px;">Edit</span>
<span class="t" style="left:1442.25px;top:158.00px;font-size:13px;line-height:13px;color:#6c757d;letter-spacing:-0.194px;-webkit-text-stroke:0.35px;">Cancel</span>
<span class="t" style="left:1545.30px;top:210.00px;font-size:13px;line-height:13px;color:#111;letter-spacing:-0.282px;font-weight:700;">Today</span>
<span class="t" style="left:1267.70px;top:238.00px;font-size:13px;line-height:13px;color:#111;letter-spacing:-0.151px;font-weight:700;">Mitchell Admin</span>
<span class="t" style="left:1361.40px;top:240.00px;font-size:11.5px;line-height:11.5px;color:#a9a9a9;letter-spacing:-0.181px;">- now</span>
<span class="t" style="left:1267.70px;top:258.00px;font-size:13px;line-height:13px;color:#444b53;letter-spacing:0.391px;">lognote</span>
<span class="t" style="left:1267.70px;top:286.00px;font-size:13px;line-height:13px;color:#111;letter-spacing:-0.151px;font-weight:700;">Mitchell Admin</span>
<span class="t" style="left:1361.40px;top:288.00px;font-size:11.5px;line-height:11.5px;color:#a9a9a9;letter-spacing:-0.109px;">- a minute ago</span>
<span class="t" style="left:1267.70px;top:306.00px;font-size:13px;line-height:13px;color:#444b53;letter-spacing:0.391px;">lognote</span>
<span class="t" style="left:1267.70px;top:334.00px;font-size:13px;line-height:13px;color:#111;letter-spacing:-0.151px;font-weight:700;">Mitchell Admin</span>
<span class="t" style="left:1361.40px;top:336.00px;font-size:11.5px;line-height:11.5px;color:#a9a9a9;letter-spacing:-0.119px;">- 4 minutes ago</span>
<span class="t" style="left:1279.20px;top:366.00px;font-size:13px;line-height:13px;color:#15191d;letter-spacing:-0.114px;">scheduled messages</span>
<span class="t" style="left:1267.70px;top:406.00px;font-size:13px;line-height:13px;color:#111;letter-spacing:-0.151px;font-weight:700;">Mitchell Admin</span>
<span class="t" style="left:1361.40px;top:408.00px;font-size:11.5px;line-height:11.5px;color:#a9a9a9;letter-spacing:-0.119px;">- 6 minutes ago</span>
<span class="t" style="left:1279.30px;top:438.00px;font-size:13px;line-height:13px;color:#15191d;letter-spacing:0.624px;">rrrr</span>
<span class="t" style="left:1267.70px;top:478.00px;font-size:13px;line-height:13px;color:#111;letter-spacing:-0.151px;font-weight:700;">Mitchell Admin</span>
<span class="t" style="left:1361.40px;top:480.00px;font-size:11.5px;line-height:11.5px;color:#a9a9a9;letter-spacing:-0.105px;">- 10 minutes ago</span>
<span class="t" style="left:1267.70px;top:498.00px;font-size:13px;line-height:13px;color:#444b53;letter-spacing:-0.207px;">Scheduled Messages</span>
<span class="t" style="left:1267.70px;top:526.00px;font-size:13px;line-height:13px;color:#111;letter-spacing:-0.151px;font-weight:700;">Mitchell Admin</span>
<span class="t" style="left:1361.40px;top:528.00px;font-size:11.5px;line-height:11.5px;color:#a9a9a9;letter-spacing:-0.105px;">- 15 minutes ago</span>
<span class="t" style="left:1267.70px;top:546.00px;font-size:13px;line-height:13px;color:#444b53;letter-spacing:-1.169px;">ee</span>
<span class="t" style="left:1267.70px;top:574.00px;font-size:13px;line-height:13px;color:#111;letter-spacing:-0.151px;font-weight:700;">Mitchell Admin</span>
<span class="t" style="left:1361.40px;top:576.00px;font-size:11.5px;line-height:11.5px;color:#a9a9a9;letter-spacing:-0.105px;">- 17 minutes ago</span>
<span class="t" style="left:1267.70px;top:594.00px;font-size:13px;line-height:13px;color:#444b53;letter-spacing:0.914px;">www</span>
<span class="t" style="left:1267.70px;top:622.00px;font-size:13px;line-height:13px;color:#111;letter-spacing:-0.249px;font-weight:700;">OdooBot</span>
<span class="t" style="left:1325.50px;top:624.00px;font-size:11.5px;line-height:11.5px;color:#a9a9a9;letter-spacing:-0.125px;">- 24 minutes ago</span>
<span class="t" style="left:1267.70px;top:642.00px;font-size:13px;line-height:13px;color:#444b53;letter-spacing:-0.058px;">Sales Order created</span>
</div>
</body></html>
